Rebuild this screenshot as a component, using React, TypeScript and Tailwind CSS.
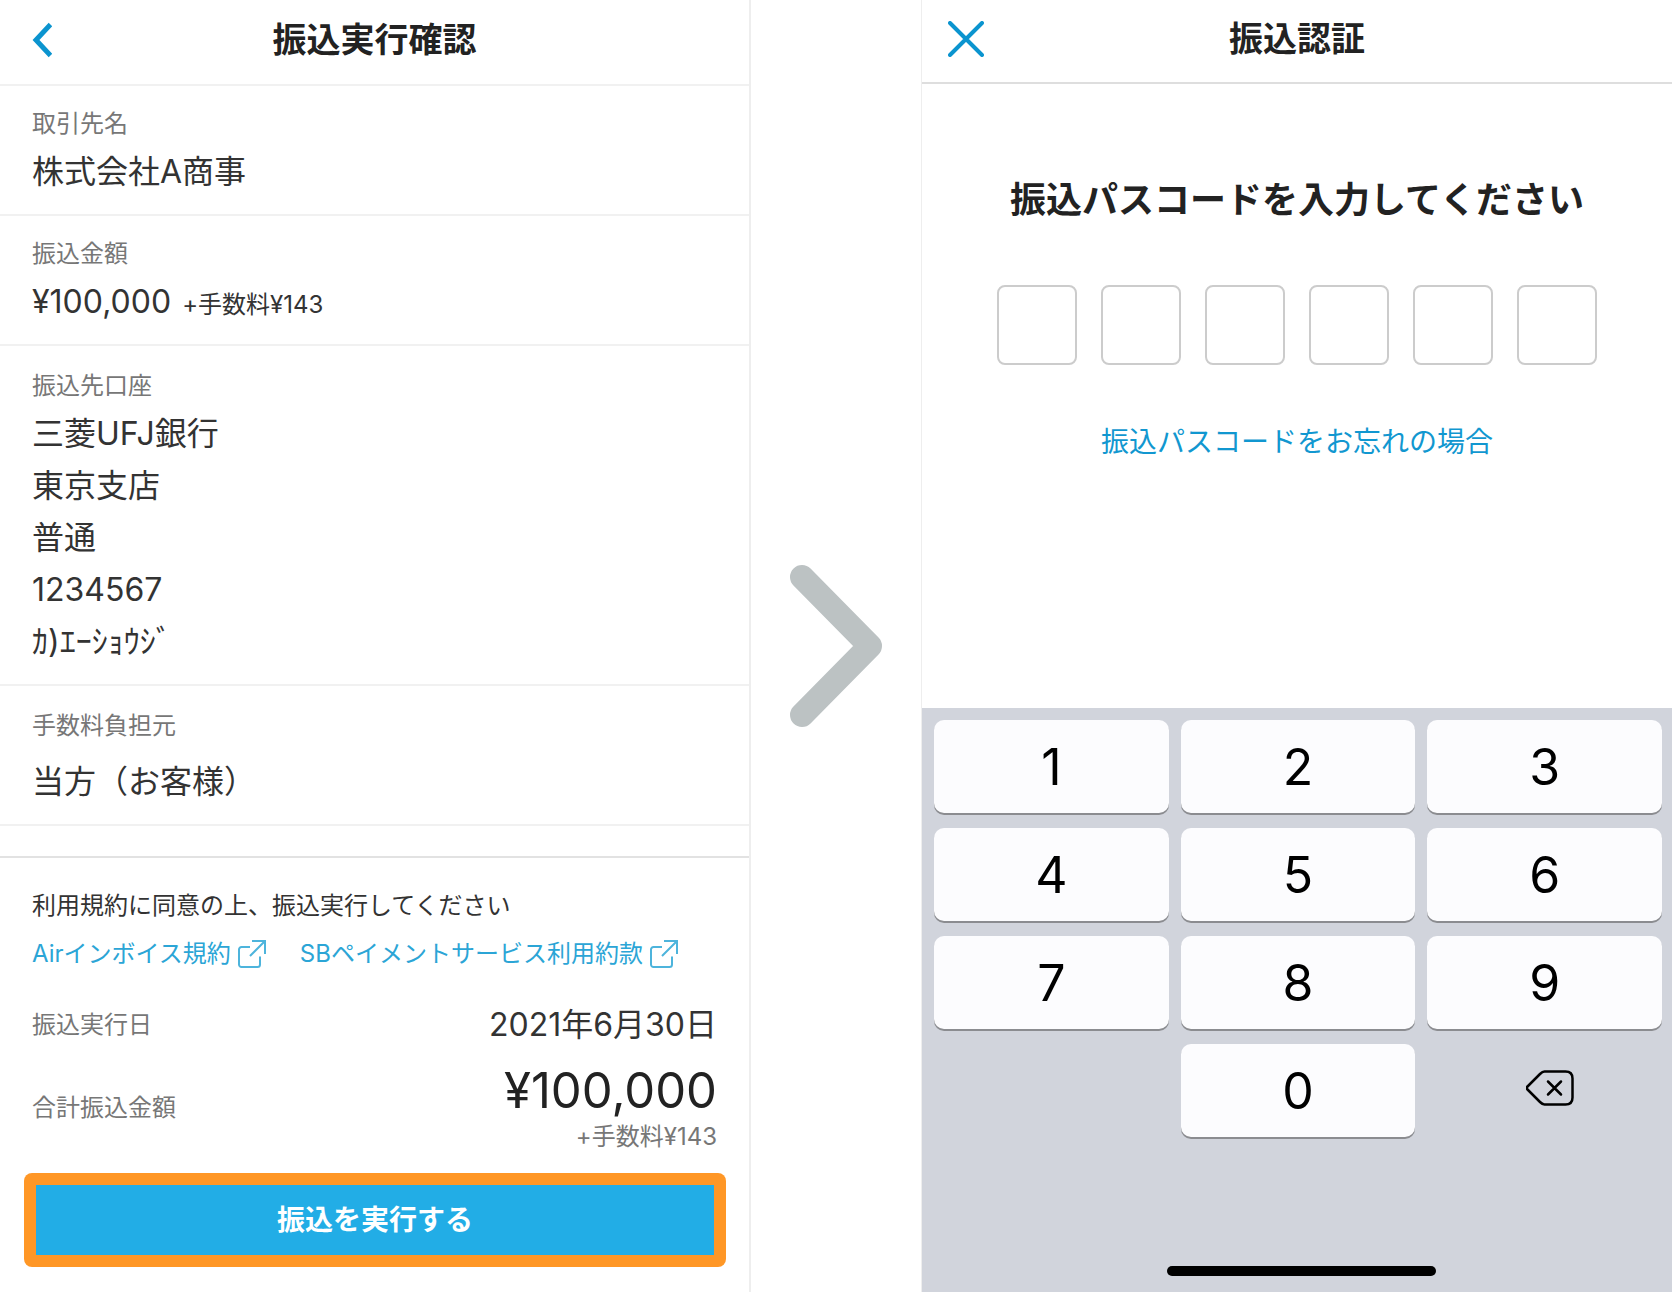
import React, {useState} from 'react';

const accountLines = ["三菱UFJ銀行", "東京支店", "普通", "1234567", "ｶ)ｴｰｼｮｳｼﾞ"];

const keys = ["1", "2", "3", "4", "5", "6", "7", "8", "9"];

const PASSCODE_LENGTH = 6;

const ExternalIcon = () => (
    <svg className="w-7 h-7 shrink-0 text-[#4db4dc]" viewBox="0 0 28 28" fill="none" stroke="currentColor"
         strokeWidth="2" aria-hidden="true">
        <path d="M12 7H3.5A2.5 2.5 0 0 0 1 9.500V24.500A2.500 2.500 0 0 0 3.500 27H19.500A2.500 2.500 0 0 0 22 24.500V16.500"/>
        <path d="M14 1H27V14M27 1L12 16"/>
    </svg>
);

type RowProps = {
    label: string;
    className: string;
    children: React.ReactNode;
};

const Row = ({label, className, children}: RowProps) => (
    <div className={`px-8 border-b-2 border-[#f1f1f1] ${className}`}>
        <dt className="text-2xl leading-8 text-[#777777]">{label}</dt>
        <dd className="mt-[6px] text-[32px] leading-[52px]">{children}</dd>
    </div>
);

// 振込実行確認
const Confirm = () => (
    <section className="flex flex-col border-r-2 border-[#eeeeee]">
        <header className="grid grid-cols-[80px_1fr_80px] items-center h-[86px] pb-1 border-b-2 border-[#f1f1f1]">
            <button type="button" aria-label="戻る" className="pl-8 text-[#0b94cf]">
                <svg className="w-5 h-9" viewBox="0 0 20 36" fill="none" stroke="currentColor" strokeWidth="5">
                    <path d="M18.500 2.500L4 18L18.500 33.500"/>
                </svg>
            </button>
            <h1 className="text-center text-[34px] leading-10 font-bold text-[#222222]">振込実行確認</h1>
        </header>
        <dl>
            <Row label="取引先名" className="pt-[22px] pb-4">株式会社A商事</Row>
            <Row label="振込金額" className="pt-[22px] pb-4">
                ¥100,000 <span className="ml-[2px] text-2xl">+手数料¥143</span>
            </Row>
            <Row label="振込先口座" className="pt-6 pb-4">
                {accountLines.map((line) => (
                    <div key={line}>{line}</div>
                ))}
            </Row>
            <Row label="手数料負担元" className="pt-6 pb-4">
                <div className="pt-2">当方（お客様）</div>
            </Row>
        </dl>
        <footer className="mt-[30px] pt-8 pb-6 border-t-2 border-[#e2e2e2]">
            <div className="px-8">
                <p className="text-2xl leading-8">利用規約に同意の上、振込実行してください</p>
                <div className="mt-4 flex gap-[34px] text-2xl leading-8 text-[#2ba5d6]">
                    <a href="#" className="flex items-center gap-[7px]">Airインボイス規約<ExternalIcon/></a>
                    <a href="#" className="flex items-center gap-[7px]">SBペイメントサービス利用約款<ExternalIcon/></a>
                </div>
                <dl>
                    <div className="mt-[35px] flex items-center justify-between">
                        <dt className="text-2xl leading-8 text-[#777777]">振込実行日</dt>
                        <dd className="text-[32px] leading-10">2021年6月30日</dd>
                    </div>
                    <div className="mt-[18px] flex items-center justify-between">
                        <dt className="text-2xl leading-8 text-[#777777]">合計振込金額</dt>
                        <dd className="text-right">
                            <div className="text-[49px] leading-[56px] text-[#222222]">¥100,000</div>
                            <div className="mt-[2px] text-2xl leading-8 text-[#777777]">+手数料¥143</div>
                        </dd>
                    </div>
                </dl>
            </div>
            <div className="ml-6 mr-[23px] mt-5 rounded-lg bg-[#ff9726] p-3">
                <button type="button" className="block w-full h-[70px] bg-[#22ade6] text-[28px] leading-10 font-bold text-white">
                    振込を実行する
                </button>
            </div>
        </footer>
    </section>
);

// 振込認証
const Passcode = () => {
    const [code, setCode] = useState("");

    const handleKey = (key: string) => {
        if (code.length < PASSCODE_LENGTH) setCode(code + key);
    };

    const keyClass = "h-[93px] rounded-[10px] bg-[#fcfcfe] text-[50px] leading-none text-black shadow-[0_2px_0_#8b8c90]";

    return (
        <section className="flex flex-col border-l border-[#eeeeee]">
            <header className="grid grid-cols-[80px_1fr_80px] items-center h-[84px] pb-1 border-b-2 border-[#dedede]">
                <button type="button" aria-label="閉じる" className="pl-[26px] text-[#0b94cf]">
                    <svg className="w-9 h-9" viewBox="0 0 36 36" fill="none" stroke="currentColor"
                         strokeWidth="4" strokeLinecap="round">
                        <path d="M2 2L34 34M34 2L2 34"/>
                    </svg>
                </button>
                <h2 className="text-center text-[34px] leading-10 font-bold text-[#222222]">振込認証</h2>
            </header>
            <div className="flex-1 flex flex-col items-center">
                <h3 className="mt-[92px] text-[36px] leading-12 font-bold text-[#222222]">
                    振込パスコードを入力してください
                </h3>
                <div className="mt-[61px] flex gap-6">
                    {Array.from({length: PASSCODE_LENGTH}, (_, idx) => (
                        <input
                            key={idx}
                            type="password"
                            inputMode="numeric"
                            aria-label={`${idx + 1}桁目`}
                            readOnly
                            value={code[idx] ?? ""}
                            className="w-20 h-20 rounded-lg border-2 border-[#cccccc] text-center text-[34px]"/>
                    ))}
                </div>
                <a href="#" className="mt-[57px] text-[28px] leading-10 text-[#1197d0]">振込パスコードをお忘れの場合</a>
            </div>
            <div className="flex flex-col h-[584px] bg-[#d1d4dc] pt-3">
                <div className="grid grid-cols-3 gap-x-3 gap-y-[15px] pl-3 pr-[10px]">
                    {keys.map((key) => (
                        <button type="button" key={key} className={keyClass} onClick={() => handleKey(key)}>{key}</button>
                    ))}
                    <button type="button" className={`col-start-2 ${keyClass}`} onClick={() => handleKey("0")}>0</button>
                    <button
                        type="button"
                        aria-label="削除"
                        className="flex items-center justify-center pl-[10px] pb-[6px] text-black"
                        onClick={() => setCode(code.slice(0, -1))}>
                        <svg className="w-12 h-9" viewBox="0 0 48 36" fill="none" stroke="currentColor"
                             strokeWidth="2.500" strokeLinecap="round" strokeLinejoin="round">
                            <path d="M18.500 1.500H39.500C44.500 1.500 46.500 4 46.500 8.500V27.500C46.500 32 44.500 34.500 39.500 34.500H18.500C16.500 34.500 15.500 33.500 14 32L1.500 19.500C.5 18.500 .5 17.500 1.500 16.500L14 4C15.500 2.500 16.500 1.500 18.500 1.500Z"/>
                            <path d="M22 11.500L35 24.500M35 11.500L22 24.500"/>
                        </svg>
                    </button>
                </div>
                <div className="mt-auto mb-4 ml-2 w-[269px] h-[10px] self-center rounded-full bg-black"/>
            </div>
        </section>
    );
};

const App = () => {
    return (
        <main className="grid grid-cols-[751fr_170fr_751fr] min-h-screen bg-white text-[#333333] font-[Inter,'Noto_Sans_CJK_JP',sans-serif]" lang="ja">
            <Confirm/>
            <div className="flex items-center justify-center">
                <svg className="w-[94px] h-[164px]" viewBox="0 0 94 164" fill="none" stroke="#bcc2c3"
                     strokeWidth="24" strokeLinecap="round" strokeLinejoin="round" aria-hidden="true">
                    <path d="M13 13L81 82L13 151"/>
                </svg>
            </div>
            <Passcode/>
        </main>
    );
};

export default App;
